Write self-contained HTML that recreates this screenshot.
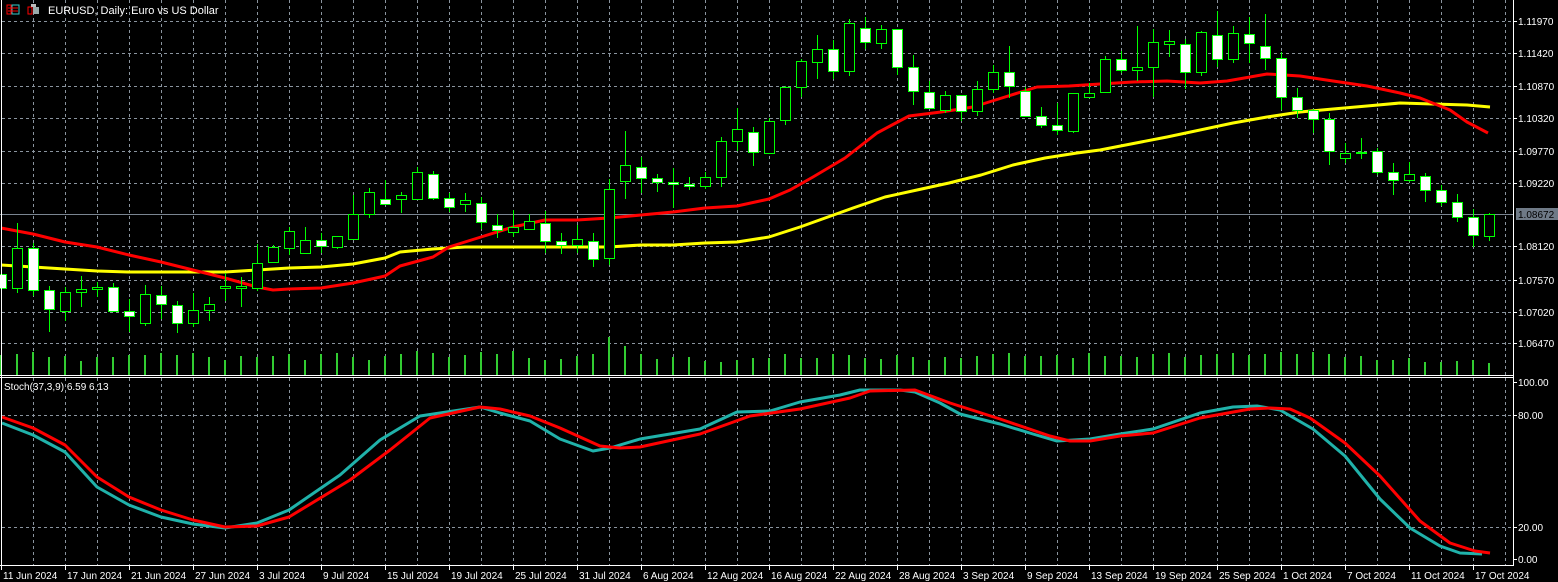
<!DOCTYPE html>
<html><head><meta charset="utf-8"><style>
html,body{margin:0;padding:0;background:#000;width:1558px;height:582px;overflow:hidden}
svg{display:block}
text{font-family:"Liberation Sans",sans-serif;font-size:10px;fill:#fff}
</style></head><body>
<svg id="s" width="1558" height="582" xmlns="http://www.w3.org/2000/svg">
<rect width="1558" height="582" fill="#000"/>
<g id="grid" stroke="#8a949e" stroke-width="1" stroke-dasharray="3,3"></g>
<line x1="0" y1="214.5" x2="1513" y2="214.5" stroke="#7a8591" stroke-width="1"/>
<g id="vol" stroke="#32cd32" stroke-width="2"></g>
<g id="ma"></g>
<g id="candles"></g>
<g id="stoch" fill="none" stroke-width="3"></g>
<g stroke="#fff" stroke-width="1" fill="none">
<line x1="1.5" y1="0" x2="1.5" y2="566"/>
<line x1="1513.5" y1="0" x2="1513.5" y2="566"/>
<line x1="0" y1="375.5" x2="1514" y2="375.5"/>
<line x1="0" y1="377.5" x2="1514" y2="377.5"/>
<line x1="0" y1="565.5" x2="1514" y2="565.5"/>
</g>
<g id="axis"></g>
<rect x="1516" y="208" width="42" height="12" fill="#6f7a87"/>
<text x="1518" y="218" style="fill:#000">1.08672</text>
<rect x="7" y="5" width="4" height="9" fill="none" stroke="#f00" stroke-width="1"/>
<rect x="12" y="5" width="7" height="9" fill="none" stroke="#3cc" stroke-width="1"/>
<line x1="8" y1="8" x2="18" y2="8" stroke="#f00"/><line x1="8" y1="11" x2="18" y2="11" stroke="#f00"/>
<rect x="28" y="7" width="4" height="7" fill="none" stroke="#f00"/>
<rect x="33" y="7" width="6" height="7" fill="#9aa"/>
<rect x="31" y="4" width="5" height="3" fill="#bbb"/>
<text x="48" y="14" style="font-size:11px">EURUSD, Daily:  Euro vs US Dollar</text>
<text x="4" y="390" style="font-size:10px">Stoch(37,3,9) 6.59 6.13</text>
</svg>
<script>
var NS="http://www.w3.org/2000/svg";
function el(p,t,a){var e=document.createElementNS(NS,t);for(var k in a)e.setAttribute(k,a[k]);p.appendChild(e);return e;}
var g=document.getElementById('grid');
for(var x=1;x<1513;x+=32){if(x<3)continue;el(g,'line',{x1:x+.5,y1:0,x2:x+.5,y2:565});}
var hy=[21,53,86,118,151,183,246,280,312,343];
hy.forEach(function(y){el(g,'line',{x1:2,y1:y+.5,x2:1513,y2:y+.5});});
[415,527].forEach(function(y){el(g,'line',{x1:2,y1:y+.5,x2:1513,y2:y+.5});});
var ax=document.getElementById('axis');
var pl=["1.11970","1.11420","1.10870","1.10320","1.09770","1.09220","1.08120","1.07570","1.07020","1.06470"];
hy.forEach(function(y,i){el(ax,'line',{x1:1513,y1:y+.5,x2:1517,y2:y+.5,stroke:'#fff'});var t=el(ax,'text',{x:1518,y:y+4});t.textContent=pl[i];});
[[382,"100.00"],[415,"80.00"],[527,"20.00"],[559,"0.00"]].forEach(function(a){el(ax,'line',{x1:1513,y1:a[0]+.5,x2:1517,y2:a[0]+.5,stroke:'#fff'});var t=el(ax,'text',{x:1518,y:a[0]+4});t.textContent=a[1];});
var dl=["11 Jun 2024","17 Jun 2024","21 Jun 2024","27 Jun 2024","3 Jul 2024","9 Jul 2024","15 Jul 2024","19 Jul 2024","25 Jul 2024","31 Jul 2024","6 Aug 2024","12 Aug 2024","16 Aug 2024","22 Aug 2024","28 Aug 2024","3 Sep 2024","9 Sep 2024","13 Sep 2024","19 Sep 2024","25 Sep 2024","1 Oct 2024","7 Oct 2024","11 Oct 2024","17 Oct 2024"];
dl.forEach(function(d,i){var x=1+64*i;el(ax,'line',{x1:x+.5,y1:566,x2:x+.5,y2:570,stroke:'#fff'});var t=el(ax,'text',{x:x+2,y:579});t.textContent=d;});
var C=[[270,274,288,292,0],[223,248,288,293,1],[243,248,290,296,0],[286,290,309,332,0],[287,292,311,321,1],[276,289,292,307,1],[282,287,289,297,1],[283,287,311,311,0],[299,311,316,332,0],[285,294,323,326,1],[286,295,304,319,0],[301,305,323,333,0],[293,310,323,327,1],[297,304,310,321,1],[273,286,288,301,1],[277,286,288,307,1],[244,263,288,291,1],[245,247,262,263,1],[227,231,248,255,1],[227,240,253,253,1],[233,240,246,253,0],[236,236,247,249,1],[195,214,239,239,1],[188,192,214,218,1],[180,199,204,205,0],[192,195,199,213,1],[167,172,199,199,1],[171,174,198,200,0],[193,198,207,212,0],[193,200,204,212,1],[197,203,222,229,0],[214,225,230,238,0],[210,227,232,237,1],[214,221,229,229,1],[211,223,241,253,0],[233,241,245,254,0],[225,239,245,253,1],[233,241,259,267,0],[179,189,258,265,1],[131,165,181,199,1],[157,167,178,193,0],[174,178,182,192,0],[168,182,184,208,0],[177,184,186,190,0],[172,177,186,189,1],[137,141,177,187,1],[108,129,141,151,1],[127,132,152,166,0],[118,121,153,153,1],[86,87,120,125,1],[59,61,87,97,1],[35,49,62,79,1],[40,49,71,79,0],[19,23,71,76,1],[17,28,42,49,0],[25,29,43,49,1],[29,29,67,75,0],[55,67,91,105,0],[81,92,108,108,0],[91,95,110,113,1],[95,95,111,121,0],[81,89,111,116,1],[65,72,89,93,1],[46,72,86,98,0],[87,91,116,116,0],[107,116,125,128,0],[103,125,130,135,0],[93,93,131,133,1],[83,93,97,98,1],[56,59,92,93,1],[51,59,70,73,0],[26,67,70,81,1],[29,42,67,97,1],[30,41,44,57,1],[39,44,72,89,0],[31,32,72,76,1],[11,35,59,67,0],[26,33,59,63,1],[17,34,43,63,0],[14,46,58,70,0],[52,58,97,110,0],[88,97,110,118,0],[109,110,119,133,0],[113,119,151,165,0],[143,153,158,163,1],[138,152,153,159,1],[148,151,172,175,0],[163,172,180,195,0],[162,174,180,182,1],[173,176,190,202,0],[185,190,202,206,0],[194,202,217,222,0],[209,217,235,247,0],[213,214,236,241,1]];
var cg=document.getElementById('candles'),vg=document.getElementById('vol');
var vt=[355,354,352,357,356,361,357,357,355,355,353,355,353,357,360,356,357,356,354,360,354,353,357,360,356,354,351,353,357,355,352,354,351,358,360,359,356,354,337,346,354,359,357,357,361,362,360,358,358,354,358,358,354,355,358,359,355,357,360,357,358,356,354,353,356,356,355,358,353,356,356,357,354,353,357,355,354,353,355,354,352,354,352,354,357,356,360,360,358,362,362,361,360,363];
C.forEach(function(c,k){var x=1+16*k;
 el(vg,'line',{x1:x,y1:375,x2:x,y2:vt[k]||356});
 el(cg,'line',{x1:x+.5,y1:c[0],x2:x+.5,y2:c[3],stroke:'#00ff00','stroke-width':1});
 var h=Math.max(c[2]-c[1],1);
 el(cg,'rect',{x:x-4.5,y:c[1]+.5,width:10,height:h,fill:c[4]?'#000':'#fff',stroke:'#00ff00','stroke-width':1});
});
function poly(p,pts,col,w){el(p,'polyline',{points:pts.map(function(a){return a.join(',')}).join(' '),fill:'none',stroke:col,'stroke-width':w,'stroke-linejoin':'round'});}
var ma=document.getElementById('ma');
poly(ma,[[1,265],[65,269],[97,271],[129,272],[225,272],[257,270],[289,268],[321,267],[353,264],[385,258],[400,252],[433,249],[465,247],[577,247],[609,247],[641,245],[673,245],[705,243],[737,242],[769,237],[800,227],[853,208],[885,197],[917,190],[949,183],[981,175],[1013,165],[1045,158],[1077,153],[1100,150],[1167,137],[1233,123],[1267,117],[1300,112],[1333,109],[1367,106],[1400,103],[1433,104],[1467,105],[1490,107]],'#ffff00',3);
poly(ma,[[1,228],[33,234],[65,242],[97,247],[129,255],[161,262],[193,270],[225,278],[257,287],[273,290],[289,289],[321,288],[353,283],[385,276],[400,266],[433,257],[449,247],[481,237],[513,227],[545,220],[577,220],[609,218],[641,215],[673,212],[705,208],[737,206],[769,199],[790,190],[813,177],[845,158],[877,133],[909,116],[941,112],[973,107],[1005,97],[1037,87],[1069,86],[1100,84],[1133,82],[1167,81],[1200,83],[1227,81],[1250,77],[1267,74],[1300,76],[1333,81],[1367,86],[1400,93],[1420,98],[1450,110],[1467,122],[1488,133]],'#ff0000',3);
var st=document.getElementById('stoch');
poly(st,[[2,423],[33,435],[65,452],[97,487],[129,505],[161,517],[193,524],[225,528],[257,523],[289,510],[340,475],[380,440],[420,416],[480,407],[500,413],[530,421],[560,439],[593,451],[610,448],[640,439],[700,429],[737,412],[770,411],[800,402],[840,395],[860,390],[900,390],[915,392],[940,403],[960,414],[1000,424],[1033,434],[1057,441],[1090,439],[1120,434],[1153,429],[1200,413],[1233,407],[1257,406],[1280,410],[1313,429],[1345,456],[1380,499],[1410,528],[1440,546],[1460,553],[1482,554]],'#20b2aa',3);
poly(st,[[2,417],[33,428],[65,445],[97,477],[129,497],[161,510],[193,520],[225,527],[257,526],[289,517],[350,480],[390,450],[430,418],[480,407],[500,409],[530,416],[560,428],[600,446],[620,448],[640,447],[700,434],[750,416],[800,409],[850,398],[870,391],[915,390],[950,403],[1000,419],[1050,436],[1070,441],[1090,441],[1120,436],[1153,433],[1200,418],[1250,409],[1270,408],[1290,409],[1310,418],[1345,443],[1380,476],[1420,521],[1450,543],[1475,551],[1490,553]],'#ff0000',3);
</script>
</body></html>
